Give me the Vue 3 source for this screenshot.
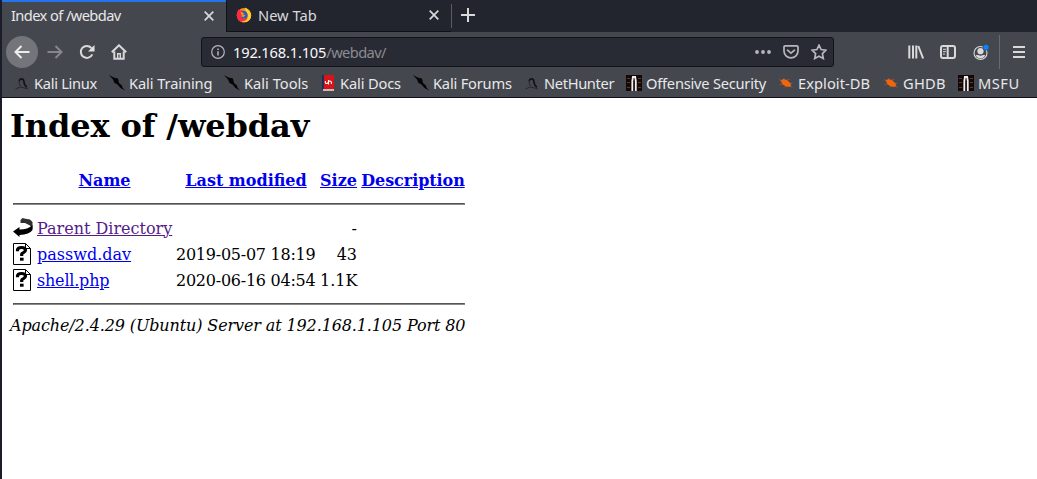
<script setup>
const bookmarks = [
  { label: 'Kali Linux', icon: 'dragon', spacing: -0.3 },
  { label: 'Kali Training', icon: 'slash', spacing: -0.1 },
  { label: 'Kali Tools', icon: 'slash', spacing: 0 },
  { label: 'Kali Docs', icon: 'book', spacing: -0.15 },
  { label: 'Kali Forums', icon: 'slash', spacing: -0.2 },
  { label: 'NetHunter', icon: 'dragon', spacing: -0.35 },
  { label: 'Offensive Security', icon: 'offsec', spacing: -0.23 },
  { label: 'Exploit-DB', icon: 'bug', spacing: 0.05 },
  { label: 'GHDB', icon: 'bug', spacing: 0.25 },
  { label: 'MSFU', icon: 'offsec', spacing: 0.5 },
]
const files = [
  { name: 'passwd.dav', date: '2019-05-07 18:19', size: '43' },
  { name: 'shell.php', date: '2020-06-16 04:54', size: '1.1K' },
]
</script>

<template>
  <div class="window">
    <div class="tabs">
      <div class="tab active">
        <span class="tab-label tight">Index of /webdav</span>
        <svg class="close" width="10" height="10" viewBox="0 0 10 10"><path d="M.7.7 9.3 9.3M9.3.7.7 9.3" /></svg>
      </div>
      <div class="tab idle">
        <svg class="fox" width="16" height="16" viewBox="0 0 16 16">
          <circle cx="8" cy="8.3" r="7.2" fill="#ff8a16" />
          <path d="M2.3 2.2 4 3.8 7 3 5 5.7 7 7.5 5 9l3 3 3-2-1 5C3 17 0 11 1 6z" fill="#fb2941" />
          <path d="M9 .5c5 2 7.5 7 5.3 11.2-2 3.8-6.8 4-9 2.3 4 .5 7-1.5 6.8-5C12 6 9 5 9 .5z" fill="#ffcf2c" />
          <path d="M5.5 4.4C9.3 2.2 12 6 11.6 9c-.5 3-5 3.6-7 .7l3 .2 2-1.7L6.3 7z" fill="#215fc7" />
          <path d="M4.2 5.2 7 5.6 8 7 5.8 8z" fill="#ff941d" />
        </svg>
        <span class="tab-label">New Tab</span>
        <svg class="close" width="10" height="10" viewBox="0 0 10 10"><path d="M.7.7 9.3 9.3M9.3.7.7 9.3" /></svg>
      </div>
      <span class="tab-rule"></span>
      <svg class="plus" width="14" height="14" viewBox="0 0 14 14"><path d="M7 0v14M0 7h14" /></svg>
    </div>

    <div class="toolbar">
      <span class="back">
        <svg width="16" height="16" viewBox="0 0 16 16"><path d="M15.5 8H1.5M7.5 2 1.5 8l6 6" /></svg>
      </span>
      <svg class="forward" width="16" height="16" viewBox="0 0 16 16"><path d="M.5 8h14M8.5 2l6 6-6 6" /></svg>
      <svg class="reload" width="16" height="16" viewBox="0 0 16 16">
        <path d="M13.3 10.4A6 6 0 1 1 12.4 4" /><path d="M15.5 1v6.4H9z" fill="#e2e2e4" stroke="none" />
      </svg>
      <svg class="home" width="16" height="16" viewBox="0 0 16 16">
        <path d="M.8 8.3 8 1.3l7.2 7M3.3 7.5v7.2h9.4V7.5" /><path d="M6.7 15V9.7h2.6V15" stroke-width="1.4" />
      </svg>
      <div class="urlbar">
        <svg class="info" width="14" height="14" viewBox="0 0 14 14"><circle cx="7" cy="7" r="6.3" /><path d="M7 6.2v4.3M7 3.4v1.5" stroke-width="1.5" /></svg>
        <span class="url"><span class="host">192.168.1.105</span><span class="path">/webdav/</span></span>
        <svg class="dots" width="16" height="16" viewBox="0 0 16 16"><circle cx="2" cy="8" r="1.9" /><circle cx="8" cy="8" r="1.9" /><circle cx="14" cy="8" r="1.9" /></svg>
        <svg class="pocket" width="16" height="16" viewBox="0 0 16 16"><path d="M2.2 1.9h11.6q1.2 0 1.2 1.2v4a7 6.7 0 0 1-14 0v-4q0-1.2 1.2-1.2z" /><path d="m4.5 6.2 3.5 3 3.5-3" stroke-linecap="round" /></svg>
        <svg class="star" width="16" height="16" viewBox="0 0 16 16"><path d="m8 1.2 2.1 4.3 4.8.7-3.5 3.4.9 4.9L8 12.2l-4.3 2.3.9-4.9L1.1 6.2l4.8-.7z" /></svg>
      </div>
      <svg class="library" width="16" height="16" viewBox="0 0 16 16"><path d="M1.3 1.5v13M5 1.5v13M8.3 1.5v13M10.3 2l4.8 12.5" /></svg>
      <svg class="sidebar" width="16" height="16" viewBox="0 0 16 16"><rect x="1" y="2" width="14" height="12" rx="2" /><path d="M7.7 2v12" /><path d="M3 5.3h3M3 7.7h3M3 10.1h2" stroke-width="1" /></svg>
      <svg class="account" width="17" height="17" viewBox="0 0 17 17">
        <circle cx="7.5" cy="9" r="6.5" fill="none" stroke="#d9d9da" stroke-width="1.1" />
        <g stroke="none">
          <circle cx="7.5" cy="7.2" r="3.1" fill="#d9d9da" />
          <path d="M2.8 10.9h2.1q2.6 1.6 5.2 0h2.1q-1 3.3-4.7 3.5-3.7-.2-4.7-3.5z" fill="#d9d9da" />
          <circle cx="13" cy="3.3" r="3.3" fill="#45484d" /><circle cx="13" cy="3.3" r="2.6" fill="#0a84ff" />
        </g>
      </svg>
      <span class="menu-rule"></span>
      <svg class="menu" width="12" height="12" viewBox="0 0 12 12"><path d="M0 1h12M0 6h12M0 11h12" /></svg>
    </div>

    <div class="bookmarks">
      <div v-for="b in bookmarks" :key="b.label" class="bookmark">
        <svg width="16" height="16" viewBox="0 0 16 16">
          <g v-if="b.icon === 'dragon'" fill="none" stroke="#141416">
            <path d="M5 5.8C6.5 3 9.500 3.300 9.800 6.200c.1 2 .6 4.200 3 6.200" stroke-width="1.8" />
            <path d="M5.500 5.500C4.800 7.500 5.200 9 6.500 11M1.500 14l4.500-2 3.500.7 4.500 1.300" stroke-width="1" opacity=".6" />
          </g>
          <path v-else-if="b.icon === 'slash'" d="M0 0 4.500 2.500 9 3.500 10 8l3 2.500.5 2 2.500 3-4.500-2.500-3-3.500L5.500 8 4 4.500z" fill="#050505" />
          <g v-else-if="b.icon === 'book'">
            <path d="M2 0h2v15H2z" fill="#202e58" /><path d="M4 0h10v14H4z" fill="#d91418" /><path d="M3 14h11v2H3z" fill="#c9b9b9" />
            <path d="M5.400 6C5 8 5.800 8.800 7.200 8.400S8.300 6 9.600 6s2.400 1.200 1.600 3M8.500 5v4.500" fill="none" stroke="#fff" stroke-width="1.100" />
          </g>
          <g v-else-if="b.icon === 'offsec'">
            <path d="M0 0h16v16H0z" fill="#120909" /><path d="M1 3h3v1H1zm0 4h3v1H1zm0 5h3v1H1zm11-9h3v1h-3zm0 4h3v1h-3zm0 5h3v1h-3z" fill="#6a3330" />
            <path d="M6.300 16V6l.6-4h2.300l.6 4v10" fill="none" stroke="#f1eeee" stroke-width="1.800" />
          </g>
          <g v-else>
            <path d="M2.500 5.200 5.500 4 9 5l3.500 3.200.8 2.500-2 1.200-3.500-.4L4.500 9.300z" fill="#f0640c" />
            <path d="M4 6 1 4.500M7 5 5.500 3M9 5l2.500-.6M12 9l2.500-1M12 11l2.500 1.500M8 11l-1 1.500M4 9l-2.500.5" fill="none" stroke="#b8602f" stroke-width=".6" />
          </g>
        </svg>
        <span :style="{ letterSpacing: b.spacing + 'px' }">{{ b.label }}</span>
      </div>
    </div>

    <main class="page">
      <h1>Index of /webdav</h1>
      <table>
        <colgroup><col class="c-icon" /><col class="c-name" /><col class="c-date" /><col class="c-size" /><col class="c-desc" /></colgroup>
        <tbody>
          <tr class="head">
            <th></th><th><a>Name</a></th><th><a>Last modified</a></th><th><a>Size</a></th><th><a class="desc">Description</a></th>
          </tr>
          <tr><th colspan="5"><hr /></th></tr>
          <tr class="entry">
            <td>
              <svg width="20" height="22" viewBox="0 0 20 22">
                <path d="M7.500 6V3l2-2 3 .8L17 2.500 19.500 5v7l-2.500-3.500L12 6z" fill="#303030" />
                <path d="M0 14.500 6.500 10v2.500q8.500 0 13-4.500v5q-3 4.500-13 5v2z" fill="#000" />
              </svg>
            </td>
            <td><a class="visited">Parent Directory</a></td><td></td><td class="right">-</td><td></td>
          </tr>
          <tr v-for="f in files" :key="f.name" class="entry">
            <td>
              <svg width="20" height="22" viewBox="0 0 20 22">
                <path d="M.5.5h12l5 5v16H.5z" fill="#fff" stroke="#000" /><path d="M12.500.5v5h5" fill="none" stroke="#000" />
                <path d="M4.500 8.300V7q.2-2.500 4-2.500t4 2.500q0 1.700-2 2.600-1.800.8-1.800 1.400v2" fill="none" stroke="#000" stroke-width="3.200" /><path d="M7 14.700h3.600v3H7z" />
              </svg>
            </td>
            <td><a :class="{ snug: f.name.length < 10 }">{{ f.name }}</a></td><td class="date">{{ f.date }}</td><td class="right">{{ f.size }}</td><td></td>
          </tr>
          <tr><th colspan="5"><hr /></th></tr>
        </tbody>
      </table>
      <address>Apache/2.4.29 (Ubuntu) Server at 192.168.1.105 Port 80</address>
    </main>
  </div>
</template>

<style>
body { margin: 0; overflow: hidden; }
</style>

<style scoped>
.window { box-sizing: border-box; width: 1037px; height: 479px; border-left: 2px solid #1b1c29; background: #fff; overflow: hidden; font-family: "Noto Sans", sans-serif; font-size: 14.67px; color: #e8e8ea; }
svg { display: block; flex: none; }
.tabs, .toolbar, .tab, .urlbar, .bookmark { display: flex; align-items: center; box-sizing: border-box; }
.tabs { height: 32px; background: #22242e; }
.tab { height: 32px; white-space: nowrap; line-height: 20px; }
.tab-label { flex: 1; }
.tight { letter-spacing: -0.6px; padding-bottom: 2px; }
.active { width: 224px; background: #44474d; border-top: 2px solid #2374ed; padding: 0 12px 2px 9px; }
.idle { width: 225px; border-left: 1px solid #101117; border-bottom: 1px solid #101117; padding: 0 12px 1px 9px; color: #dadadd; }
.fox { margin-right: 6px; }
.close, .plus { fill: none; stroke: #d9d9da; stroke-width: 1.7; }
.plus { stroke-width: 2; margin-left: 9px; margin-bottom: 2px; }
.tab-rule { width: 1px; height: 24px; background: #5b5c63; }
.toolbar { height: 40px; background: #44474d; }
.toolbar > svg { fill: none; stroke: #d9d9da; stroke-width: 2; }
.back { display: flex; align-items: center; justify-content: center; width: 32px; height: 32px; border-radius: 50%; background: #73757a; margin-left: 4px; }
.back svg { fill: none; stroke: #ededee; stroke-width: 2; }
.toolbar .forward { margin-left: 9px; stroke: #85878b; }
.toolbar .reload { margin-left: 16px; }
.toolbar .home { margin-left: 16px; }
.urlbar { width: 633px; height: 30px; margin-left: 74px; background: #282a34; border: 1px solid #121318; border-radius: 3px; padding: 0 6px 0 9px; color: #8b8c92; }
.urlbar svg { fill: none; stroke: #b7b7bb; stroke-width: 1.7; }
.urlbar .info { stroke-width: 1.2; }
.url { flex: 1; margin-left: 8px; white-space: nowrap; }
.host { color: #f9f9fa; letter-spacing: -0.18px; }
.path { letter-spacing: -0.6px; }
.urlbar .dots { fill: #b7b7bb; stroke: none; }
.pocket { margin-left: 12px; }
.star { margin-left: 12px; }
.library { margin-left: 74px; }
.sidebar { margin-left: 16px; }
.account { margin-left: 17px; }
.menu-rule { width: 1px; height: 34px; background: #686a6f; margin-left: 9px; }
.menu { margin-left: 13px; }
.bookmarks { display: grid; grid-template-columns: 95px 115px 96px 93px 111px 102px 152px 105px 75px 70px; box-sizing: border-box; height: 26px; padding: 0 0 3px 12px; background: #44474d; border-bottom: 1px solid #101117; }
.bookmark { gap: 4px; white-space: nowrap; }
.page { padding: 9px 8px 0; height: 381px; box-sizing: border-box; font-family: "DejaVu Serif", serif; font-size: 16px; line-height: 19px; color: #000; }
h1 { font-size: 32px; line-height: 38px; margin: 0 0 23px; white-space: nowrap; letter-spacing: -0.12px; }
table { border-spacing: 2px; table-layout: fixed; width: 458px; }
th, td { padding: 1px; white-space: nowrap; }
td { text-align: left; }
.head th { height: 20px; vertical-align: top; }
.c-icon { width: 22px; }
.c-name { width: 137px; }
.c-date { width: 142px; }
.c-size { width: 39px; }
.c-desc { width: 106px; }
.entry td { height: 22px; }
.date { letter-spacing: -0.25px; }
.snug { letter-spacing: -0.2px; }
.desc { letter-spacing: -0.08px; }
td.right { text-align: right; }
a { color: #0000ee; text-decoration: underline; }
a.visited { color: #551a8b; }
hr { margin: 8px 0; height: 0; border: 1px solid; border-color: #555 #888 #888 #555; }
address { font-style: italic; white-space: nowrap; letter-spacing: -0.12px; }
</style>
